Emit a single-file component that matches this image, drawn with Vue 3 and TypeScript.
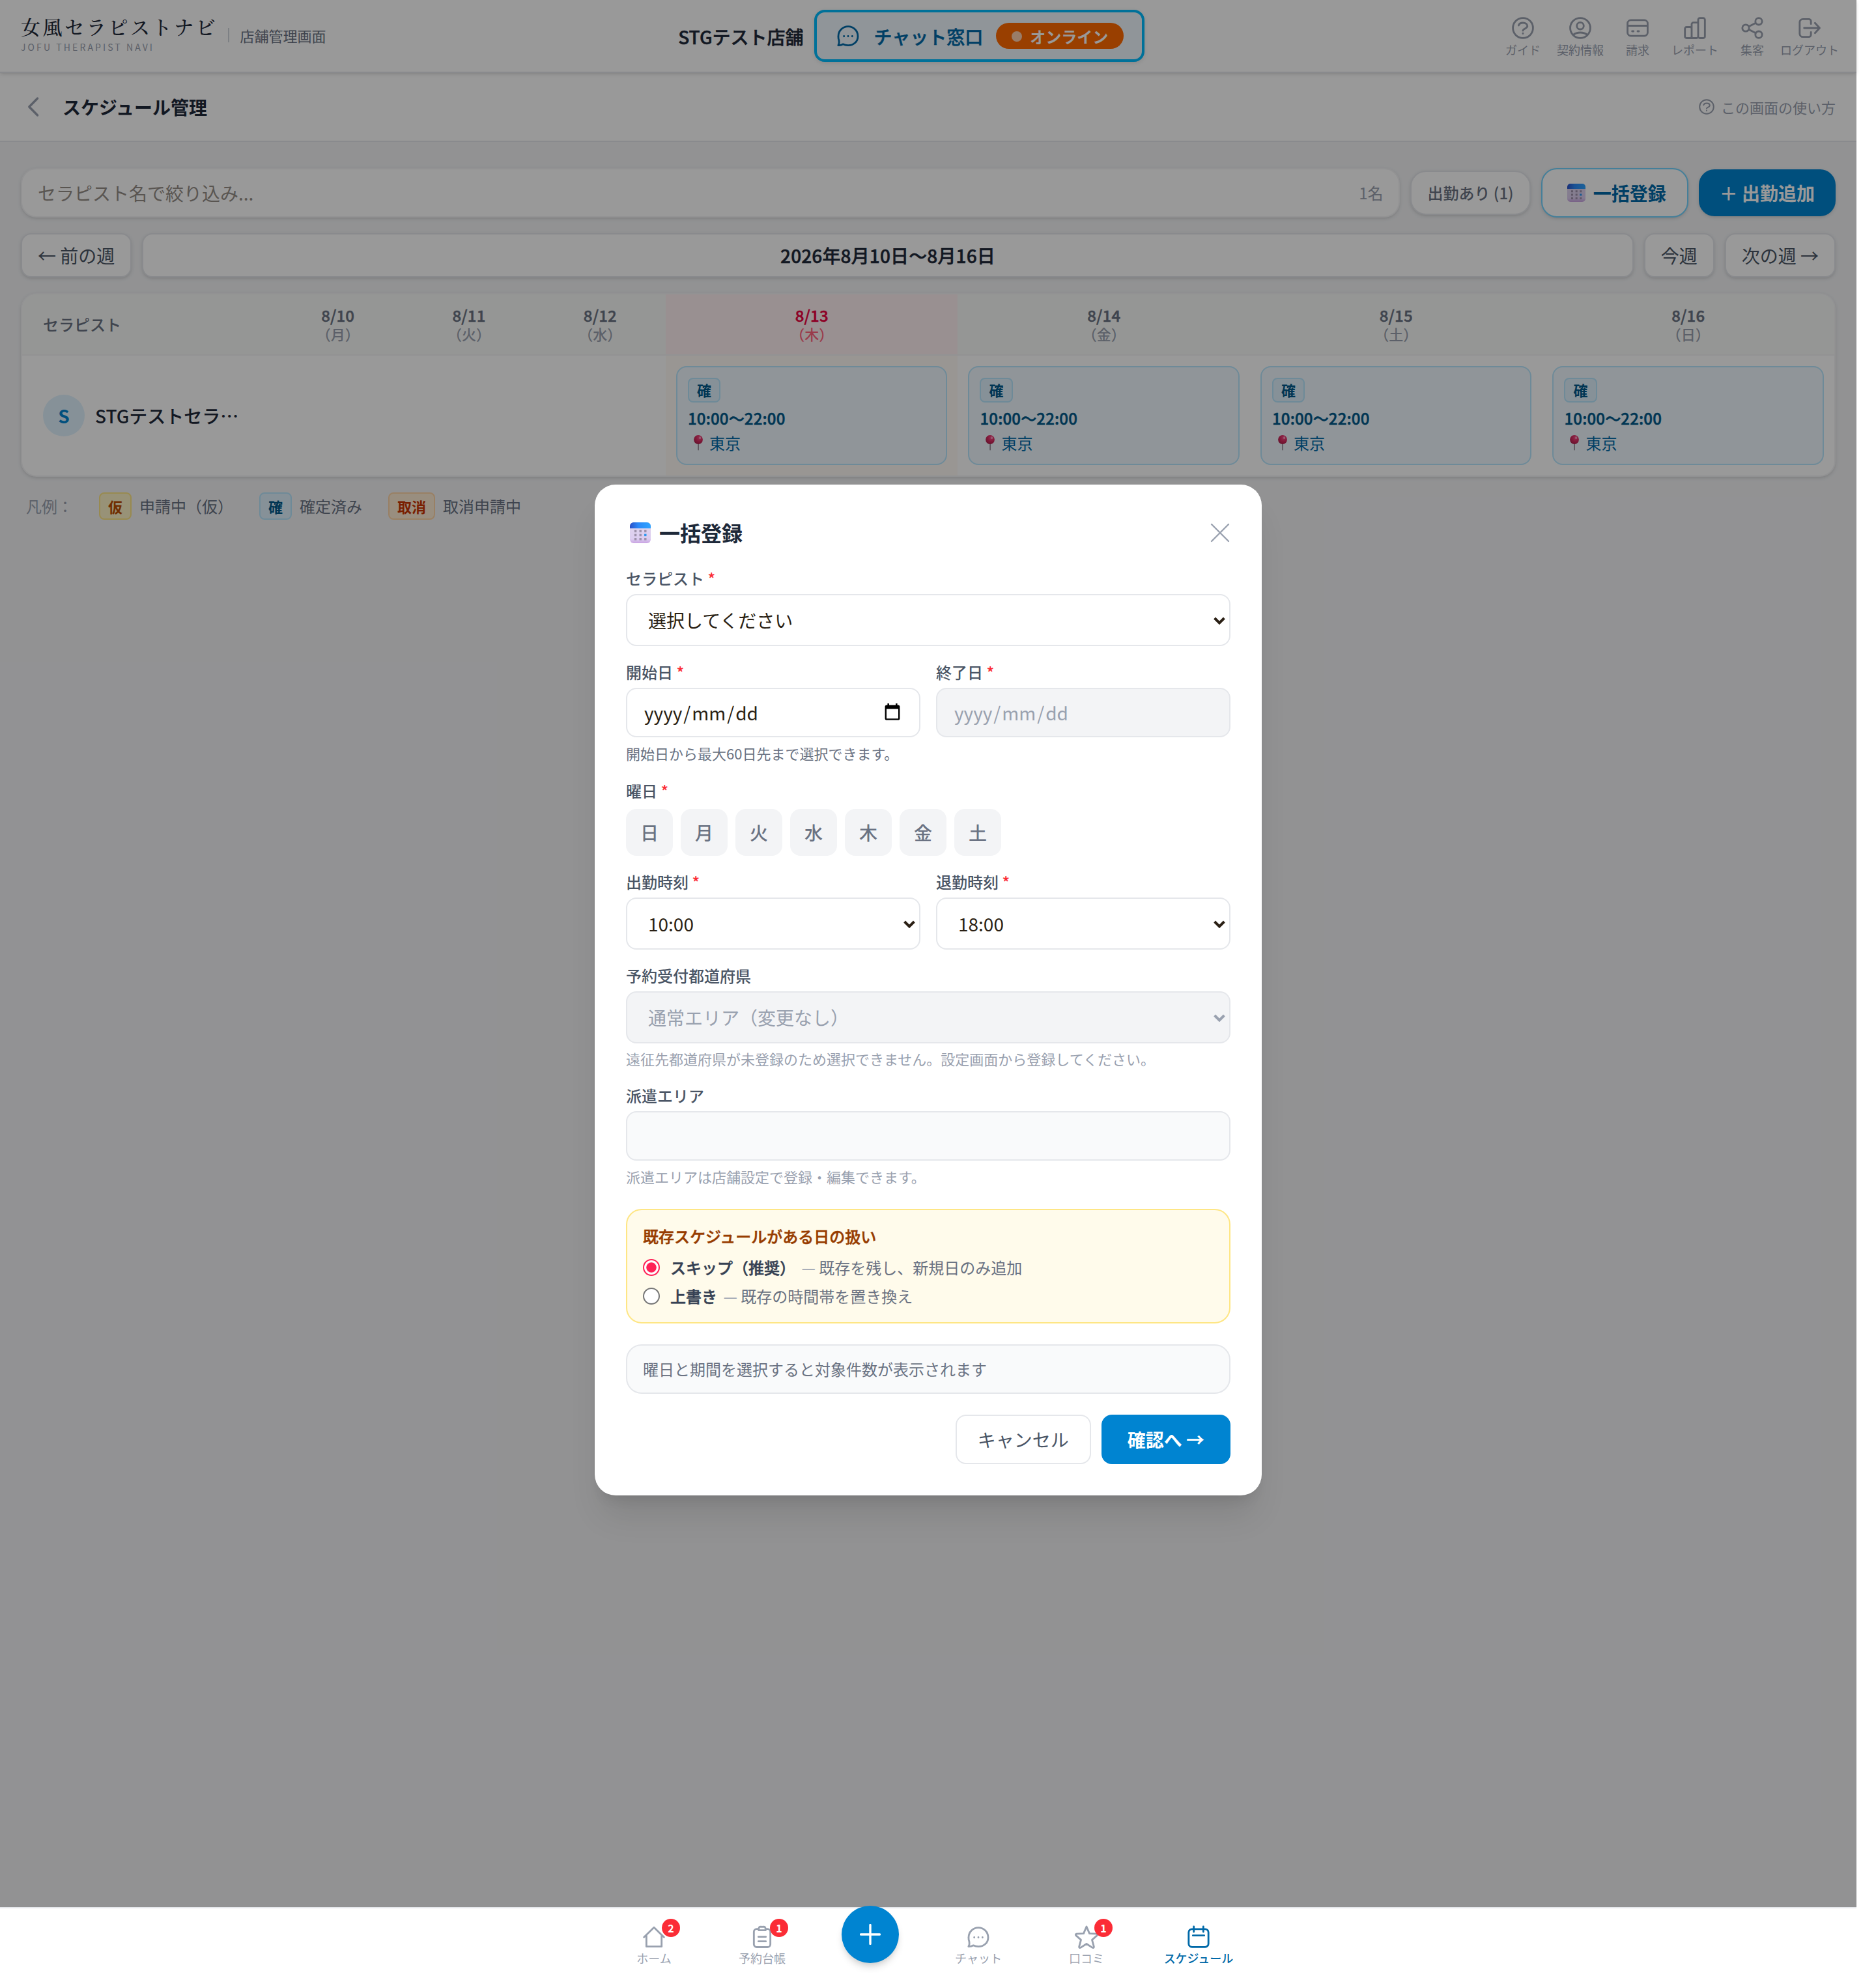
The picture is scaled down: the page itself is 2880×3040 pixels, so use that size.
<script setup lang="ts">
import { ref } from 'vue'

interface DayColumn {
  date: string
  day: string
  today?: boolean
  shift?: { time: string; place: string }
}

const shift = { time: '10:00～22:00', place: '東京' }
const columns: DayColumn[] = [
  { date: '8/10', day: '（月）' },
  { date: '8/11', day: '（火）' },
  { date: '8/12', day: '（水）' },
  { date: '8/13', day: '（木）', today: true, shift },
  { date: '8/14', day: '（金）', shift },
  { date: '8/15', day: '（土）', shift },
  { date: '8/16', day: '（日）', shift },
]

const headerLinks: { label: string; icon: string }[] = [
  { label: 'ガイド', icon: 'help' },
  { label: '契約情報', icon: 'user' },
  { label: '請求', icon: 'card' },
  { label: 'レポート', icon: 'chart' },
  { label: '集客', icon: 'share' },
  { label: 'ログアウト', icon: 'logout' },
]

const legend = [
  { tag: '仮', text: '申請中（仮）', tone: 'amber' },
  { tag: '確', text: '確定済み', tone: 'sky' },
  { tag: '取消', text: '取消申請中', tone: 'orange' },
]

const navItems: { label: string; icon: string; badge?: number; active?: boolean }[] = [
  { label: 'ホーム', icon: 'home', badge: 2 },
  { label: '予約台帳', icon: 'clipboard', badge: 1 },
  { label: '', icon: 'plus' },
  { label: 'チャット', icon: 'chat' },
  { label: '口コミ', icon: 'star', badge: 1 },
  { label: 'スケジュール', icon: 'calendar', active: true },
]

const icons: Record<string, string> = {
  help: 'M12 2.75a9.25 9.25 0 1 0 0 18.5a9.25 9.25 0 0 0 0-18.5zM8 9.6C8.5 8 10 7.2 12 7.2c2.4 0 4.1 1.2 4.1 3 0 2.4-4.1 2.3-4.1 4.2M12 16.9v.2',
  user: 'M12 2.75a9.25 9.25 0 1 0 0 18.5a9.25 9.25 0 0 0 0-18.5zM12 6.8a3.2 3.2 0 1 0 0 6.4a3.2 3.2 0 0 0 0-6.4zM5.6 18.2c1.6-1.3 3.8-2 6.4-2s4.8.7 6.4 2',
  card: 'M5.75 4.75h12.5a3 3 0 0 1 3 3v8.5a3 3 0 0 1-3 3H5.75a3 3 0 0 1-3-3v-8.5a3 3 0 0 1 3-3zM2.75 9.9h18.5M7 15h1.2M12 15h1.2',
  chart: 'M4.4 11.1h3a1.5 1.5 0 0 1 1.6 1.6v7a1.5 1.5 0 0 1-1.6 1.6h-3a1.5 1.5 0 0 1-1.6-1.6v-7a1.5 1.5 0 0 1 1.6-1.6zM9 19.7V8.6A1.5 1.5 0 0 1 10.6 7h4.4M7.4 21.3h6a1.5 1.5 0 0 0 1.6-1.6V4.4a1.5 1.5 0 0 1 1.6-1.6h3a1.5 1.5 0 0 1 1.6 1.6v15.3a1.5 1.5 0 0 1-1.6 1.6h-3a1.5 1.5 0 0 1-1.6-1.6M9 19.7a1.5 1.5 0 0 0 1.6 1.6',
  share: 'M6 8.9a3.1 3.1 0 1 0 0 6.2a3.1 3.1 0 0 0 0-6.2zM18 2.8a3.1 3.1 0 1 0 0 6.2a3.1 3.1 0 0 0 0-6.2zM18 15a3.1 3.1 0 1 0 0 6.2a3.1 3.1 0 0 0 0-6.2zM8.8 10.6l6.4-3.2M8.8 13.4l6.4 3.2',
  logout: 'M13.3 8.2V5.8a2 2 0 0 0-2-2H5.9a3 3 0 0 0-3 3v10.4a3 3 0 0 0 3 3h5.4a2 2 0 0 0 2-2v-2.4M7 12h14.2M17 7.4l4.3 4.6l-4.3 4.6',
  home: 'M2.8 12.2L12 3.2l9.2 9M5 10.2v10.6h14V10.2',
  clipboard: 'M8.6 4.6H7a2.6 2.6 0 0 0-2.6 2.6V18.7a2.6 2.6 0 0 0 2.6 2.6h10a2.6 2.6 0 0 0 2.6-2.6V7.2A2.6 2.6 0 0 0 17 4.6h-1.6M8.8 5.8h6.4c0-4-1.2-3.2-3.2-3.2s-3.2-.8-3.2 3.2zM8.6 11.8h6.8M8.6 16h6.8',
  chat: 'M2.9 20.8c.9-1.6 1-3.2.7-4.4A9 9 0 0 1 3 12.4C3 7.4 7 3.4 12 3.4s9 4 9 9-4 8.4-9 8.4c-1.8 0-3.3-.4-4.6-1.1c-1.5.9-3 1.2-4.5 1.1zM8.2 12.3v.2M12 12.3v.2M15.8 12.3v.2',
  star: 'M12 2.4l2.7 6.4 6.6.3c.8.1 1 1 .4 1.5l-4.6 4 1.7 6.3c.2.8-.6 1.3-1.3.9L12 18.3l-5.500 3.500c-.7.4-1.500-.1-1.300-.9l1.700-6.300-4.600-4c-.6-.5-.4-1.400.4-1.500l6.600-.3z',
  calendar: 'M5.9 4.7h12.2a3 3 0 0 1 3 3v10.5a3 3 0 0 1-3 3H5.9a3 3 0 0 1-3-3V7.7a3 3 0 0 1 3-3zM7.6 2.4v4.8M16.4 2.4v4.8M6.8 10.6h10.4',
}

const weekdays = ['日', '月', '火', '水', '木', '金', '土']
const mode = ref('skip')
</script>

<template>
  <div class="screen">
    <div class="page">
      <header class="topbar">
        <div class="brand">
          <div class="logo">
            <span class="logo-ja">女風セラピストナビ</span>
            <span class="logo-en">JOFU THERAPIST NAVI</span>
          </div>
          <span class="brand-sub">店舗管理画面</span>
        </div>
        <div class="store">
          <span class="store-name semi">STGテスト店舗</span>
          <div class="chat-btn">
            <svg class="ic20" viewBox="0 0 24 24"><path :d="icons.chat" /></svg>
            <span class="chat-label semi">チャット窓口</span>
            <span class="online"><i></i>オンライン</span>
          </div>
        </div>
        <nav class="links">
          <a v-for="l in headerLinks" :key="l.label" class="link">
            <svg class="ic20" viewBox="0 0 24 24"><path :d="icons[l.icon]" /></svg>
            <span>{{ l.label }}</span>
          </a>
        </nav>
      </header>

      <div class="subbar">
        <svg class="back" viewBox="0 0 10 16"><path d="M8.3 1.5L1.9 8l6.4 6.5" /></svg>
        <h1>スケジュール管理</h1>
        <span class="howto">
          <svg viewBox="0 0 24 24"><path :d="icons.help" /></svg>この画面の使い方
        </span>
      </div>

      <main>
        <div class="row tools">
          <div class="search"><span>セラピスト名で絞り込み...</span><em>1名</em></div>
          <button class="filter">出勤あり (1)</button>
          <button class="bulk">
            <svg class="emoji" viewBox="0 0 28 28"><use href="#cal-emoji" /></svg>一括登録
          </button>
          <button class="add">＋ 出勤追加</button>
        </div>
        <div class="row week">
          <button>← 前の週</button>
          <div class="range semi">2026年8月10日～8月16日</div>
          <button>今週</button>
          <button>次の週 →</button>
        </div>

        <section class="table">
          <div class="grid head">
            <div class="name-h">セラピスト</div>
            <div v-for="c in columns" :key="c.date" class="day" :class="{ today: c.today }">
              <b class="semi">{{ c.date }}</b><small>{{ c.day }}</small>
            </div>
          </div>
          <div class="grid body">
            <div class="person"><span class="avatar">S</span><span>STGテストセラ…</span></div>
            <div v-for="c in columns" :key="c.date" class="cell" :class="{ today: c.today }">
              <div v-if="c.shift" class="shift">
                <span class="tag sky">確</span>
                <span class="time semi">{{ c.shift.time }}</span>
                <span class="place">
                  <svg viewBox="0 0 14 24"><use href="#pin-emoji" /></svg>{{ c.shift.place }}
                </span>
              </div>
            </div>
          </div>
        </section>

        <div class="legend">
          <span class="lg-title">凡例：</span>
          <span v-for="g in legend" :key="g.tag" class="lg">
            <span class="tag big" :class="g.tone">{{ g.tag }}</span>{{ g.text }}
          </span>
        </div>
      </main>
    </div>

    <div class="overlay">
      <div class="modal">
        <div class="m-head">
          <svg class="emoji" viewBox="0 0 28 28"><use href="#cal-emoji" /></svg>
          <h2>一括登録</h2>
          <svg class="close" viewBox="0 0 14 14"><path d="M.5.5l13 13M13.5.5l-13 13" /></svg>
        </div>

        <div class="field">
          <label>セラピスト <i>*</i></label>
          <div class="select">
            <select><option>選択してください</option></select>
            <svg viewBox="0 0 10 6"><path d="M1.3 1L5 4.7 8.7 1" /></svg>
          </div>
        </div>

        <div class="pair">
          <div class="field">
            <label>開始日 <i>*</i></label>
            <div class="date">
              <div><span>yyyy</span>/<span>mm</span>/<span>dd</span></div>
              <svg viewBox="0 0 12 13"><path fill-rule="evenodd" d="M2.2 0h1.3v1.2h5V0h1.3v1.2h.7c.7 0 1.2.5 1.2 1.2v9.2c0 .7-.5 1.2-1.2 1.2h-9C.8 12.800.3 12.300.3 11.600V2.400c0-.7.5-1.200 1.200-1.200h.7zM1.500 4.300v7.300h9V4.300z" /></svg>
            </div>
          </div>
          <div class="field">
            <label>終了日 <i>*</i></label>
            <div class="date off"><div><span>yyyy</span>/<span>mm</span>/<span>dd</span></div></div>
          </div>
        </div>
        <p class="hint dark">開始日から最大60日先まで選択できます。</p>

        <div class="field days-field">
          <label>曜日 <i>*</i></label>
          <div class="days"><button v-for="d in weekdays" :key="d">{{ d }}</button></div>
        </div>

        <div class="pair">
          <div class="field">
            <label>出勤時刻 <i>*</i></label>
            <div class="select">
              <select><option>10:00</option></select>
              <svg viewBox="0 0 10 6"><path d="M1.3 1L5 4.7 8.7 1" /></svg>
            </div>
          </div>
          <div class="field">
            <label>退勤時刻 <i>*</i></label>
            <div class="select">
              <select><option>18:00</option></select>
              <svg viewBox="0 0 10 6"><path d="M1.3 1L5 4.7 8.7 1" /></svg>
            </div>
          </div>
        </div>

        <div class="field">
          <label>予約受付都道府県</label>
          <div class="select off">
            <select disabled><option>通常エリア（変更なし）</option></select>
            <svg viewBox="0 0 10 6"><path d="M1.3 1L5 4.7 8.7 1" /></svg>
          </div>
        </div>
        <p class="hint tight">遠征先都道府県が未登録のため選択できません。設定画面から登録してください。</p>

        <div class="field">
          <label>派遣エリア</label>
          <div class="readonly"></div>
        </div>
        <p class="hint">派遣エリアは店舗設定で登録・編集できます。</p>

        <div class="policy">
          <strong class="semi">既存スケジュールがある日の扱い</strong>
          <label class="opt">
            <input v-model="mode" type="radio" value="skip" />
            <span><b class="semi">スキップ（推奨）</b> <span class="desc"><s>—</s> 既存を残し、新規日のみ追加</span></span>
          </label>
          <label class="opt">
            <input v-model="mode" type="radio" value="overwrite" />
            <span><b class="semi">上書き</b> <span class="desc"><s>—</s> 既存の時間帯を置き換え</span></span>
          </label>
        </div>

        <div class="count">曜日と期間を選択すると対象件数が表示されます</div>

        <div class="actions">
          <button class="cancel">キャンセル</button>
          <button class="confirm">確認へ →</button>
        </div>
      </div>
    </div>

    <nav class="tabbar">
      <div class="tabs">
        <div v-for="n in navItems" :key="n.icon" class="tab" :class="{ active: n.active }">
          <div v-if="n.icon === 'plus'" class="fab">
            <svg viewBox="0 0 16 16"><path d="M8 .8v14.4M.8 8h14.4" /></svg>
          </div>
          <template v-else>
            <div class="tab-ic">
              <svg class="ic20" viewBox="0 0 24 24"><path :d="icons[n.icon]" /></svg>
              <span v-if="n.badge" class="badge">{{ n.badge }}</span>
            </div>
            <span>{{ n.label }}</span>
          </template>
        </div>
      </div>
    </nav>

    <svg class="defs" aria-hidden="true">
      <defs>
        <linearGradient id="cal-top" x1="0" x2="1" y1="0" y2="0">
          <stop offset="0" stop-color="#2b50c8" />
          <stop offset=".4" stop-color="#2b88f8" />
          <stop offset="1" stop-color="#2fa4ff" />
        </linearGradient>
        <linearGradient id="cal-body" x1="0" x2="0" y1="0" y2="1">
          <stop offset="0" stop-color="#dfd6ec" />
          <stop offset=".8" stop-color="#dccdf0" />
          <stop offset="1" stop-color="#c9a2e2" />
        </linearGradient>
        <radialGradient id="pin-ball" cx=".62" cy=".3" r=".75">
          <stop offset="0" stop-color="#f8508a" />
          <stop offset=".5" stop-color="#d82a60" />
          <stop offset="1" stop-color="#a8204c" />
        </radialGradient>
        <symbol id="cal-emoji" viewBox="0 0 28 28">
          <rect width="28" height="28" rx="5" fill="url(#cal-body)" />
          <path class="cal-band" d="M0 8V5a5 5 0 0 1 5-5h18a5 5 0 0 1 5 5v3z" />
          <path class="cal-dots" d="M6 10.3h3v3H6zM12.7 10.3h3v3h-3zM19.3 10.3h3v3h-3zM6 15.5h3v3H6zM12.7 15.5h3v3h-3zM6 21h3v3H6zM12.7 21h3v3h-3zM19.3 21h3v3h-3z" />
          <path class="cal-mark" d="M19.3 15.5h3v3h-3z" />
        </symbol>
        <symbol id="pin-emoji" viewBox="0 0 14 24">
          <rect x="6.2" y="11" width="1.8" height="12.6" rx=".8" fill="#9c8f9c" />
          <circle cx="7" cy="7" r="6.9" fill="url(#pin-ball)" />
          <ellipse cx="9.6" cy="4.2" rx="1.5" ry="1.9" fill="#ff9cc0" />
        </symbol>
      </defs>
    </svg>
  </div>
</template>

<style>
html,
body {
  margin: 0;
  background: #fff;
}
</style>

<style scoped>
.screen {
  zoom: 2;
  position: relative;
  width: 1440px;
  height: 1520px;
  overflow: hidden;
  background: #fff;
  color: #2a1f14;
  font-family: "Noto Sans CJK JP", "Noto Sans", sans-serif;
  font-size: 14px;
  line-height: 20px;
}
.screen * {
  box-sizing: border-box;
}
.defs {
  position: absolute;
  width: 0;
  height: 0;
}
svg path {
  fill: none;
  stroke: currentColor;
  stroke-width: 1.7;
  stroke-linecap: round;
  stroke-linejoin: round;
}
.defs path {
  stroke: none;
}
.defs .cal-band {
  fill: url(#cal-top);
}
.defs .cal-dots {
  fill: #9e92ac;
}
.defs .cal-mark {
  fill: #2b96f0;
}
button {
  font: inherit;
  margin: 0;
  white-space: nowrap;
}
/* semibold: the family only ships medium and bold */
.semi {
  font-weight: 500;
  -webkit-text-stroke: 0.25px currentColor;
}
.ic20 {
  display: block;
  flex: none;
  width: 20px;
  height: 20px;
}
.page {
  width: 1425px;
  height: 1520px;
  background: #f3f4f6;
}

/* top bar */
.topbar {
  position: relative;
  display: flex;
  justify-content: space-between;
  align-items: center;
  height: 56px;
  padding: 0 16px;
  background: #fff;
  border-bottom: 1px solid #e5e7eb;
  box-shadow: 0 1px 3px rgba(0, 0, 0, 0.1), 0 1px 2px -1px rgba(0, 0, 0, 0.1);
}
.brand {
  display: flex;
  align-items: center;
  gap: 8px;
}
.logo {
  display: flex;
  flex-direction: column;
  margin-bottom: 3px;
}
.logo-ja {
  font-family: "Noto Serif CJK JP", "Noto Serif JP", "Liberation Serif", serif;
  font-size: 15px;
  font-weight: 500;
  line-height: 17px;
  letter-spacing: 1.8px;
  color: #1e2939;
}
.logo-en {
  margin-top: 3px;
  font-size: 7px;
  line-height: 9px;
  letter-spacing: 1.55px;
  color: #99a1af;
}
.brand-sub {
  margin-bottom: 1px;
  padding-left: 8px;
  border-left: 1px solid #d1d5dc;
  font-size: 11px;
  line-height: 11px;
  color: #6a7282;
}
.store {
  display: flex;
  align-items: center;
  gap: 8px;
}
.store-name {
  padding-top: 1px;
  color: #1e2939;
}
.chat-btn {
  display: flex;
  align-items: center;
  gap: 10px;
  height: 40px;
  padding: 0 14px;
  border: 2px solid #00bcff;
  border-radius: 8px;
  background: #f0f9ff;
  box-shadow: 0 1px 3px rgba(0, 0, 0, 0.1);
  color: #0069a8;
}
.chat-label {
  padding-top: 1px;
}
.online {
  display: flex;
  align-items: center;
  gap: 6px;
  height: 20px;
  padding: 0.5px 12px 0;
  border-radius: 10px;
  background: #ff6900;
  color: #fff;
  font-size: 12px;
  font-weight: 700;
  line-height: 16px;
}
.online i {
  width: 8px;
  height: 8px;
  border-radius: 50%;
  background: #ffd0b0;
}
.links {
  display: flex;
  justify-content: flex-end;
  gap: 4px;
}
.link {
  display: flex;
  flex-direction: column;
  align-items: center;
  gap: 1px;
  width: 40px;
  color: #99a1af;
  font-size: 9px;
  line-height: 11px;
  white-space: nowrap;
}
.link span {
  margin: 0 -10px;
}

/* sub bar */
.subbar {
  display: flex;
  align-items: center;
  height: 53px;
  padding: 0 16px 0 20.5px;
  background: #fff;
  border-bottom: 1px solid #e5e7eb;
}
.back {
  width: 10px;
  height: 16px;
  color: #99a1af;
}
h1 {
  margin: 0 auto 0 17.5px;
  font-size: 14px;
  font-weight: 700;
  color: #1e2939;
}
.howto {
  display: flex;
  align-items: center;
  gap: 4px;
  font-size: 11px;
  color: #99a1af;
}
.howto svg {
  width: 14px;
  height: 14px;
}

/* content */
main {
  padding: 20px 16px;
}
.row {
  display: flex;
  align-items: center;
  gap: 8px;
}
.row > * {
  background: #fff;
  box-shadow: 0 1px 3px rgba(0, 0, 0, 0.1), 0 1px 2px -1px rgba(0, 0, 0, 0.1);
}
.search {
  flex: 1;
  display: flex;
  justify-content: space-between;
  align-items: center;
  height: 38px;
  padding: 0 12px;
  border: 1px solid #f3f4f6;
  border-radius: 12px;
  color: #958e88;
}
.search em {
  font-style: normal;
  font-size: 12px;
  color: #99a1af;
}
.filter {
  height: 34px;
  padding: 0 12px;
  border: 1px solid #e5e7eb;
  border-radius: 12px;
  font-size: 12px;
  font-weight: 500;
  color: #6a7282;
}
.bulk {
  display: flex;
  align-items: center;
  height: 38px;
  padding: 0 16px;
  border: 1px solid #74d4ff;
  border-radius: 12px;
  font-weight: 700;
  color: #0069a8;
}
.bulk .emoji {
  width: 14px;
  height: 14px;
  margin: 0 6px 0 3px;
}
.row .add {
  height: 36px;
  padding: 0 16px;
  border: 0;
  border-radius: 12px;
  background: #0084d1;
  color: #fff;
  font-weight: 700;
}
.week {
  margin-top: 12px;
}
.week > * {
  height: 34px;
  padding: 0 12px;
  border: 1px solid #e5e7eb;
  border-radius: 8px;
  line-height: 32px;
  color: #4a5565;
}
.week .range {
  flex: 1;
  text-align: center;
  letter-spacing: 0.07px;
  color: #1e2939;
}
.table {
  margin-top: 12px;
  overflow: hidden;
  border: 1px solid #f3f4f6;
  border-radius: 12px;
  background: #fff;
  box-shadow: 0 1px 3px rgba(0, 0, 0, 0.1), 0 1px 2px -1px rgba(0, 0, 0, 0.1);
}
.grid {
  display: grid;
  grid-template-columns: 192px repeat(3, 100.67px) repeat(4, 1fr);
}
.head {
  height: 47px;
  border-bottom: 1px solid #f3f4f6;
  background: #f8faf8;
  color: #6a7282;
}
.name-h {
  align-self: center;
  padding-left: 16px;
  font-size: 12px;
  font-weight: 500;
}
.day {
  display: flex;
  flex-direction: column;
  align-items: center;
  padding-top: 8.5px;
}
.day b {
  font-size: 12px;
  line-height: 15px;
  letter-spacing: 0.08px;
}
.day small {
  font-size: 11px;
  font-weight: 500;
  line-height: 13px;
  color: #99a1af;
}
.day.today {
  background: #fff1f2;
  color: #ec003f;
}
.day.today small {
  color: #ff637e;
}
.body {
  height: 92px;
}
.person {
  display: flex;
  align-items: center;
  gap: 8px;
  padding-left: 16px;
  font-weight: 500;
  color: #1e2939;
  white-space: nowrap;
}
.avatar {
  display: grid;
  place-items: center;
  width: 32px;
  height: 32px;
  border-radius: 50%;
  background: #dff2fe;
  color: #0084d1;
  font-weight: 700;
}
.cell {
  padding: 8px;
}
.cell.today {
  background: #fffaf6;
}
.shift {
  display: flex;
  flex-direction: column;
  align-items: flex-start;
  height: 76px;
  padding: 8px;
  border: 1px solid #b8e6fe;
  border-radius: 8px;
  background: #f0f9ff;
  font-size: 12px;
  color: #00598a;
}
.tag {
  display: inline-block;
  height: 19px;
  padding: 0 6px;
  border: 1px solid;
  border-radius: 4px;
  font-size: 11px;
  font-weight: 700;
  line-height: 16px;
}
.tag.big {
  height: 21px;
  line-height: 19px;
}
.tag.sky {
  border-color: #b8e6fe;
  background: #dff2fe;
  color: #00598a;
}
.tag.amber {
  border-color: #fee685;
  background: #fef3c6;
  color: #bb4d00;
}
.tag.orange {
  border-color: #ffd6a7;
  background: #ffedd4;
  color: #ca3500;
}
.time {
  margin-top: 4px;
  line-height: 16px;
  letter-spacing: 0.08px;
}
.place {
  display: flex;
  align-items: center;
  margin-top: 3px;
  line-height: 16px;
  color: #0069a8;
}
.place svg {
  width: 7px;
  height: 12px;
  margin: 0 5px 0 4.5px;
}
.legend {
  display: flex;
  align-items: center;
  gap: 20px;
  margin-top: 12px;
  padding-left: 4px;
  font-size: 12px;
  color: #6a7282;
}
.lg-title {
  color: #99a1af;
}
.lg {
  display: flex;
  align-items: center;
  gap: 6px;
}

/* dialog */
.overlay {
  position: absolute;
  top: 0;
  left: 0;
  display: flex;
  align-items: center;
  justify-content: center;
  width: 1425px;
  height: 1520px;
  background: rgba(0, 0, 0, 0.4);
}
.modal {
  width: 512px;
  padding: 24px;
  border-radius: 16px;
  background: #fff;
  box-shadow: 0 20px 25px -5px rgba(0, 0, 0, 0.1), 0 8px 10px -6px rgba(0, 0, 0, 0.1);
}
.m-head {
  display: flex;
  align-items: center;
  height: 24px;
  margin-bottom: 16px;
  padding: 1px 1px 0 3px;
}
.m-head .emoji {
  width: 16px;
  height: 16px;
  margin-top: 1px;
}
.m-head h2 {
  margin: 0 auto 0 6.5px;
  font-size: 16px;
  font-weight: 700;
  color: #1e2939;
}
.close {
  width: 14px;
  height: 14px;
  margin-top: 0.5px;
  overflow: visible;
  color: #99a1af;
}
.close path {
  stroke-width: 1.2;
}
.field {
  flex: 1;
}
.field + .field,
.field + .pair,
.pair + .field,
.hint + .field {
  margin-top: 12px;
}
.pair {
  display: flex;
  gap: 12px;
}
.pair .field {
  margin-top: 0;
}
.field > label {
  display: block;
  margin-bottom: 4px;
  font-size: 12px;
  font-weight: 500;
  line-height: 16px;
  color: #4a5565;
}
.field > label i {
  font-style: normal;
  color: #fb2c36;
}
.select {
  position: relative;
}
.select select {
  display: block;
  appearance: none;
  width: 100%;
  height: 40px;
  padding: 0 16px;
  border: 1px solid #e5e7eb;
  border-radius: 8px;
  background: #fff;
  font: inherit;
  color: #2a1f14;
}
.select svg {
  position: absolute;
  top: 17.5px;
  right: 3.5px;
  width: 10px;
  height: 6px;
}
.select svg path {
  stroke-width: 2;
  stroke-linecap: butt;
  stroke-linejoin: miter;
}
.select.off svg {
  color: #99a1af;
}
.select.off select {
  background: #f3f4f6;
  color: #99a1af;
  opacity: 1;
}
.date,
.readonly {
  display: flex;
  align-items: center;
  justify-content: space-between;
  height: 38px;
  padding: 0 14.5px 0 12px;
  border: 1px solid #e5e7eb;
  border-radius: 8px;
}
.date span {
  padding: 0 1px;
}
.date svg {
  width: 12px;
  height: 13px;
  margin-top: -1.5px;
}
.date svg path {
  fill: #000;
  stroke: none;
}
.date.off {
  background: #f3f4f6;
  color: #99a1af;
}
.readonly {
  background: #f9fafb;
}
.hint {
  margin: 0;
  padding: 3.5px 0 0.5px;
  font-size: 11px;
  line-height: 17px;
  color: #99a1af;
}
.hint.tight {
  line-height: 16px;
}
.hint.dark {
  color: #6a7282;
}
.days-field > label {
  margin-bottom: 6px;
}
.days {
  display: flex;
  gap: 6px;
}
.days button {
  width: 36px;
  height: 36px;
  padding: 0;
  border: 0;
  border-radius: 8px;
  background: #f3f4f6;
  color: #6a7282;
  font-weight: 500;
}
.policy {
  display: flex;
  flex-direction: column;
  height: 88px;
  margin-top: 16px;
  padding: 12px;
  border: 1px solid #fee685;
  border-radius: 12px;
  background: #fffbeb;
  font-size: 12px;
  line-height: 16px;
}
.policy strong {
  margin-bottom: 8px;
  color: #973c00;
}
.opt {
  display: flex;
  align-items: center;
  gap: 8px;
  height: 16px;
  margin-bottom: 6px;
}
.opt input {
  width: 13px;
  height: 13px;
  margin: 0;
  accent-color: #ff2056;
}
.opt b {
  color: #364153;
}
.desc {
  margin-left: 2px;
  color: #6a7282;
}
.desc s {
  text-decoration: none;
  color: #99a1af;
}
.count {
  height: 38px;
  margin-top: 16px;
  padding: 0 12px;
  border: 1px solid #e5e7eb;
  border-radius: 12px;
  background: #f9fafb;
  font-size: 12px;
  line-height: 36px;
  color: #6a7282;
}
.actions {
  display: flex;
  justify-content: flex-end;
  gap: 8px;
  margin-top: 16px;
}
.actions button {
  height: 38px;
  border-radius: 8px;
}
.cancel {
  padding: 0 16px;
  border: 1px solid #e5e7eb;
  background: #fff;
  color: #4a5565;
}
.confirm {
  padding: 0 20px;
  border: 0;
  background: #0084d1;
  color: #fff;
  font-weight: 700;
}

/* bottom navigation */
.tabbar {
  position: absolute;
  left: 0;
  bottom: 0;
  width: 1425px;
  height: 56px;
  border-top: 1px solid #e5e7eb;
  background: #fff;
}
.tabs {
  display: grid;
  grid-template-columns: repeat(5, 83px) 89px;
  justify-content: center;
}
.tab {
  display: flex;
  flex-direction: column;
  align-items: center;
  padding-top: 12px;
  color: #99a1af;
  font-size: 9px;
  line-height: 12px;
}
.tab.active {
  color: #0069a8;
  font-weight: 500;
}
.tab-ic {
  position: relative;
}
.badge {
  position: absolute;
  top: -4px;
  left: 16px;
  width: 14px;
  height: 14px;
  border-radius: 50%;
  background: #fb2c36;
  color: #fff;
  font-size: 8px;
  font-weight: 700;
  line-height: 14px;
  text-align: center;
}
.fab {
  display: grid;
  place-items: center;
  width: 44px;
  height: 44px;
  margin-top: -14px;
  border-radius: 50%;
  background: #0084d1;
  color: #fff;
  box-shadow: 0 4px 6px -1px rgba(0, 0, 0, 0.15), 0 2px 4px -2px rgba(0, 0, 0, 0.1);
}
.fab svg {
  width: 16px;
  height: 16px;
}
</style>
